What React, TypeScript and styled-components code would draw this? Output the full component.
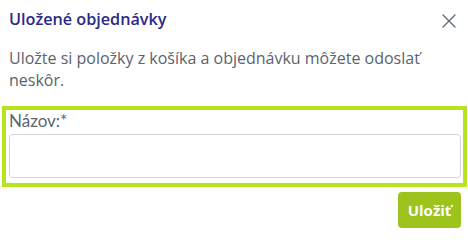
import React, { useState } from 'react';
import styled, { createGlobalStyle } from 'styled-components';

const GlobalStyle = createGlobalStyle`
  html, body {
    margin: 0;
    padding: 0;
    background: #ffffff;
  }
  * {
    box-sizing: border-box;
  }
`;

const Modal = styled.div`
  width: 468px;
  padding: 0 7px 0 9px;
  font-family: 'Open Sans', 'Liberation Sans', sans-serif;
`;

const Header = styled.div`
  display: flex;
  align-items: flex-start;
  justify-content: space-between;
  padding-top: 8px;
  margin-bottom: 16px;
`;

const Title = styled.h3`
  margin: 0;
  font-size: 16.2px;
  line-height: 22px;
  font-weight: 600;
  color: #2b2986;
`;

const CloseButton = styled.button`
  display: flex;
  align-items: center;
  justify-content: center;
  width: 20px;
  height: 20px;
  padding: 0;
  margin: 3px 2px 0 0;
  border: none;
  background: none;
  cursor: pointer;
  color: #5a6674;
`;

const Intro = styled.p`
  margin: 0 0 15px;
  font-size: 16px;
  line-height: 22px;
  color: #5a636e;
`;

const FormGroup = styled.div`
  margin: 0 -6px 0 -7px;
  padding: 1px 2px 5px 3px;
  border: 4px solid #b6e41e;
`;

const Label = styled.label`
  display: block;
  font-family: Lato, 'Liberation Sans', sans-serif;
  font-size: 17px;
  line-height: 20px;
  color: #5b6570;
  margin-bottom: 3px;
`;

const Input = styled.input`
  display: block;
  width: 100%;
  height: 44px;
  padding: 0 10px;
  border: 1px solid #d3d7dd;
  border-radius: 4px;
  font-family: Lato, 'Liberation Sans', sans-serif;
  font-size: 15px;
  outline: none;
`;

const Footer = styled.div`
  display: flex;
  justify-content: flex-end;
  padding-top: 5px;
`;

const SaveButton = styled.button`
  height: 36px;
  width: 63px;
  padding: 0;
  border: none;
  border-radius: 4px;
  background: #9cc41c;
  color: #ffffff;
  font-family: 'Open Sans', 'Liberation Sans', sans-serif;
  font-size: 15px;
  font-weight: 700;
  cursor: pointer;
`;

const CloseIcon = () => (
  <svg width="14" height="14" viewBox="0 0 14 14" fill="none">
    <path d="M1 1L13 13M13 1L1 13" stroke="currentColor" strokeWidth="1.3" strokeLinecap="round" />
  </svg>
);

const App: React.FC = () => {
  const [name, setName] = useState('');

  return (
    <>
      <GlobalStyle />
      <Modal>
        <Header>
          <Title>Uložené objednávky</Title>
          <CloseButton aria-label="Zavrieť">
            <CloseIcon />
          </CloseButton>
        </Header>
        <Intro>Uložte si položky z košíka a objednávku môžete odoslať neskôr.</Intro>
        <FormGroup>
          <Label htmlFor="order-name">Názov:*</Label>
          <Input id="order-name" value={name} onChange={e => setName(e.target.value)} />
        </FormGroup>
        <Footer>
          <SaveButton>Uložiť</SaveButton>
        </Footer>
      </Modal>
    </>
  );
};

export default App;
